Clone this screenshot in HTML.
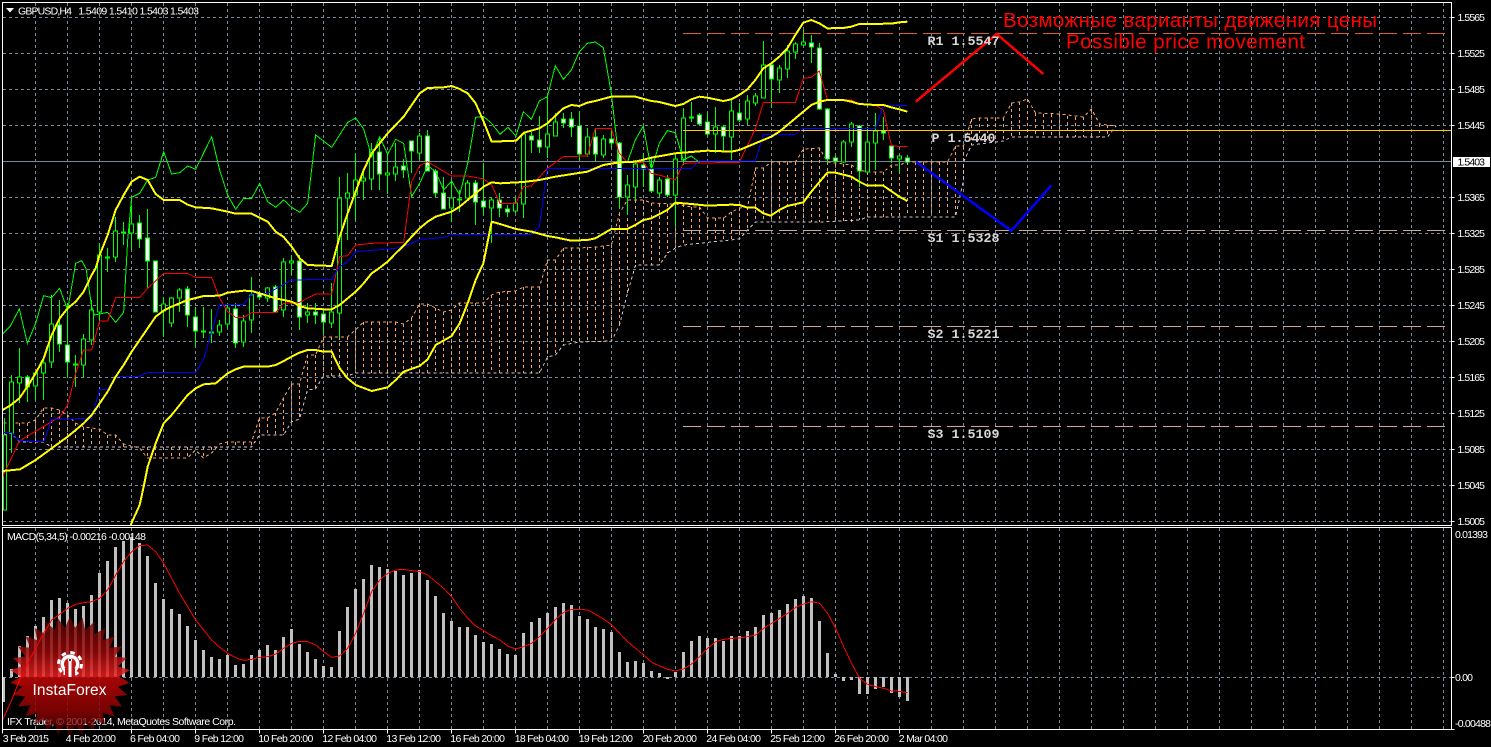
<!DOCTYPE html>
<html><head><meta charset="utf-8"><title>GBPUSD,H4</title>
<style>
html,body{margin:0;padding:0;background:#000;width:1491px;height:747px;overflow:hidden}
svg{display:block}
.a{font-family:"Liberation Sans",sans-serif;font-size:10.5px;fill:#fff}
.m{font-family:"Liberation Mono",monospace;font-size:13.33px;font-weight:bold;fill:#d8d8d8}
.r{font-family:"Liberation Sans",sans-serif;font-size:20.5px;fill:#f00}
</style></head><body>
<svg xmlns="http://www.w3.org/2000/svg" width="1491" height="747" viewBox="0 0 1491 747">
<rect width="1491" height="747" fill="#000"/>
<g fill="none" shape-rendering="crispEdges">
<!-- grid -->
<g stroke="#778899" stroke-width="1" stroke-dasharray="3 3">
<path d="M3 17.5H1451M3 53.5H1451M3 89.5H1451M3 125.5H1451M3 197.5H1451M3 233.5H1451M3 269.5H1451M3 305.5H1451M3 341.5H1451M3 377.5H1451M3 413.5H1451M3 449.5H1451M3 485.5H1451M3 521.5H1451M3 677.5H1451"/>
<path d="M35.5 3V525M67.5 3V525M99.5 3V525M131.5 3V525M163.5 3V525M195.5 3V525M227.5 3V525M259.5 3V525M291.5 3V525M323.5 3V525M355.5 3V525M387.5 3V525M419.5 3V525M451.5 3V525M483.5 3V525M515.5 3V525M547.5 3V525M579.5 3V525M611.5 3V525M643.5 3V525M675.5 3V525M707.5 3V525M739.5 3V525M771.5 3V525M803.5 3V525M835.5 3V525M867.5 3V525M899.5 3V525M931.5 3V525M963.5 3V525M995.5 3V525M1027.5 3V525M1059.5 3V525M1091.5 3V525M1123.5 3V525M1155.5 3V525M1187.5 3V525M1219.5 3V525M1251.5 3V525M1283.5 3V525M1315.5 3V525M1347.5 3V525M1379.5 3V525M1411.5 3V525M1443.5 3V525"/>
<path d="M35.5 528V729M67.5 528V729M99.5 528V729M131.5 528V729M163.5 528V729M195.5 528V729M227.5 528V729M259.5 528V729M291.5 528V729M323.5 528V729M355.5 528V729M387.5 528V729M419.5 528V729M451.5 528V729M483.5 528V729M515.5 528V729M547.5 528V729M579.5 528V729M611.5 528V729M643.5 528V729M675.5 528V729M707.5 528V729M739.5 528V729M771.5 528V729M803.5 528V729M835.5 528V729M867.5 528V729M899.5 528V729M931.5 528V729M963.5 528V729M995.5 528V729M1027.5 528V729M1059.5 528V729M1091.5 528V729M1123.5 528V729M1155.5 528V729M1187.5 528V729M1219.5 528V729M1251.5 528V729M1283.5 528V729M1315.5 528V729M1347.5 528V729M1379.5 528V729M1411.5 528V729M1443.5 528V729"/>
</g>
<path d="M3 161.5H1451" stroke="#778899"/>
<!-- cloud -->
<g stroke-dasharray="3 3">
<path stroke="#f4a460" d="M11.5 423V433M19.5 423V442M27.5 423V442M35.5 420V442M43.5 408V442M51.5 408V447M59.5 410V447M67.5 415V447M75.5 423V447M83.5 427V447M91.5 429V447M99.5 429V447M107.5 435V447M115.5 435V447M123.5 444V447M147.5 447V458M155.5 447V458M163.5 447V458M171.5 447V458M179.5 447V458M187.5 447V458M203.5 447V458M211.5 447V453M227.5 442V447M235.5 442V447M243.5 442V447M251.5 442V447M259.5 418V435M267.5 418V435M275.5 413V435M283.5 398V435M291.5 384V422M299.5 384V419M307.5 355V390M315.5 355V389M323.5 337V376M331.5 337V376M339.5 337V376M347.5 337V376M355.5 330V373M363.5 322V373M371.5 322V373M379.5 322V373M387.5 322V373M395.5 322V373M403.5 324V373M411.5 318V373M419.5 304V373M427.5 304V373M435.5 308V373M443.5 312V373M451.5 310V373M459.5 303V373M467.5 303V373M475.5 303V373M483.5 303V373M491.5 295V373M499.5 292V373M507.5 291V373M515.5 291V373M523.5 287V373M531.5 287V373M539.5 287V373M547.5 260V357M555.5 260V355M563.5 248V345M571.5 248V344M579.5 248V342M587.5 247V342M595.5 247V342M603.5 246V341M611.5 245V341M619.5 213V325M627.5 200V293M635.5 200V267M643.5 200V265M651.5 203V265M659.5 204V265M667.5 204V253M675.5 204V248M683.5 204V245M691.5 207V243M699.5 207V242M707.5 218V241M715.5 218V241M723.5 218V240M731.5 212V239M739.5 208V239M747.5 207V230M755.5 168V222M763.5 168V222M771.5 162V222M779.5 162V222M787.5 162V222M795.5 162V222M803.5 149V222M811.5 148V222M819.5 148V222M827.5 162V222M835.5 163V222M843.5 164V222M851.5 165V222M859.5 170V220M867.5 172V217M875.5 172V217M883.5 172V217M891.5 165V217M899.5 165V216M907.5 162V216M915.5 162V216M923.5 162V216M931.5 162V216M939.5 162V216M947.5 162V216M955.5 146V216M963.5 146V180M971.5 119V145M979.5 118V142M987.5 118V142M995.5 118V142M1003.5 118V141M1011.5 103V137M1019.5 102V137M1027.5 99V137M1035.5 113V137M1043.5 114V137M1051.5 114V137M1059.5 114V137M1067.5 116V137M1075.5 117V137M1083.5 117V137M1091.5 109V137M1099.5 124V137M1107.5 125V137"/>
<polyline stroke="#f4a460" points="3.5,423 27.5,423 35.5,420 43.5,408 51.5,408 59.5,410 67.5,415 75.5,423 83.5,427 99.5,429 107.5,435 115.5,435 123.5,444 139.5,448 147.5,458 187.5,458 195.5,450 203.5,458 211.5,453 219.5,444 227.5,442 251.5,442 259.5,418 267.5,418 275.5,413 283.5,398 291.5,384 299.5,384 307.5,355 315.5,355 323.5,337 347.5,337 355.5,330 363.5,322 395.5,322 403.5,324 411.5,318 419.5,304 427.5,304 435.5,308 443.5,312 451.5,310 459.5,303 483.5,303 491.5,295 499.5,292 515.5,291 523.5,287 539.5,287 547.5,260 555.5,260 563.5,248 579.5,248 595.5,247 603.5,246 611.5,245 619.5,213 627.5,200 643.5,200 651.5,203 675.5,204 691.5,207 699.5,207 707.5,218 723.5,218 731.5,212 739.5,208 747.5,207 755.5,168 763.5,168 771.5,162 795.5,162 803.5,149 819.5,148 827.5,162 835.5,163 851.5,165 859.5,170 867.5,172 883.5,172 891.5,165 899.5,165 907.5,162 947.5,162 955.5,146 963.5,146 971.5,119 979.5,118 1003.5,118 1011.5,103 1019.5,102 1027.5,99 1035.5,113 1059.5,114 1083.5,117 1091.5,109 1099.5,124 1116,126"/>
<polyline stroke="#d8bfd8" points="3.5,435 11.5,433 19.5,442 43.5,442 51.5,447 251.5,447 259.5,435 283.5,435 291.5,422 299.5,419 307.5,390 315.5,389 323.5,376 347.5,376 355.5,373 539.5,373 547.5,357 555.5,355 563.5,345 579.5,342 611.5,341 619.5,325 627.5,293 635.5,265 659.5,265 667.5,253 675.5,248 683.5,245 739.5,239 747.5,230 755.5,222 819.5,222 859.5,220 867.5,217 955.5,217 963.5,180 963.5,162 971.5,145 995.5,142 1003.5,141 1011.5,137 1107.5,137 1116,126"/>
</g>
<!-- wicks -->
<path stroke="#0f0" d="M4.5 418V510M11.5 375V453M19.5 348V403M27.5 375V402M35.5 373V400M43.5 357V400M51.5 295V368M59.5 300V352M67.5 303V377M75.5 355V387M83.5 334V377M91.5 300V345M99.5 243V322M107.5 248V272M115.5 217V262M123.5 222V245M131.5 205V250M139.5 215V248M147.5 209V288M155.5 261V312M163.5 297V337M171.5 297V327M179.5 288V312M187.5 286V327M195.5 307V347M203.5 307V338M211.5 309V343M219.5 320V336M227.5 303V328M235.5 303V348M243.5 315V347M251.5 277V333M259.5 291V300M267.5 287V302M275.5 285V313M283.5 258V317M291.5 255V275M299.5 255V330M307.5 303V323M315.5 303V324M323.5 308V334M331.5 283V328M339.5 177V338M347.5 173V240M355.5 153V220M363.5 170V200M371.5 143V190M379.5 137V190M387.5 155V194M395.5 143V181M403.5 159V178M411.5 141V173M419.5 133V160M427.5 130V171M435.5 169V197M443.5 177V209M451.5 180V222M459.5 190V212M467.5 180V198M475.5 180V225M483.5 163V215M491.5 197V243M499.5 193V217M507.5 205V217M515.5 197V213M523.5 134V218M531.5 132V153M539.5 116V153M547.5 97V158M555.5 113V136M563.5 113V128M571.5 112V137M579.5 111V160M587.5 128V157M595.5 128V162M603.5 135V158M611.5 128V148M619.5 142V209M627.5 175V215M635.5 160V200M643.5 153V187M651.5 157V193M659.5 177V197M667.5 175V197M675.5 153V227M683.5 108V165M691.5 102V122M699.5 113V125M707.5 113V135M715.5 107V153M723.5 125V152M731.5 100V160M739.5 103V122M747.5 95V125M755.5 93V106M763.5 41V98M771.5 65V107M779.5 65V93M787.5 45V78M795.5 42V59M803.5 30V46M811.5 35V63M819.5 43V110M827.5 108V163M835.5 155V163M843.5 140V163M851.5 122V147M859.5 125V187M867.5 127V173M875.5 113V170M883.5 117V140M891.5 146V163M899.5 156V173M907.5 155V163"/>
<!-- black bodies -->
<path stroke="#0f0" fill="#000" d="M3.5 435h3V510h-3zM9.5 382h4V433h-4zM17.5 377h4V383h-4zM33.5 373h4V386h-4zM41.5 363h4V373h-4zM49.5 324h4V362h-4zM81.5 339h4V365h-4zM89.5 310h4V340h-4zM97.5 255h4V312h-4zM113.5 231h4V257h-4zM129.5 224h4V233h-4zM161.5 304h4V311h-4zM169.5 298h4V323h-4zM177.5 290h4V298h-4zM217.5 325h4V332h-4zM225.5 308h4V324h-4zM241.5 321h4V342h-4zM249.5 295h4V320h-4zM265.5 288h4V298h-4zM281.5 262h4V310h-4zM289.5 261h4V263h-4zM305.5 312h4V315h-4zM329.5 312h4V323h-4zM337.5 198h4V313h-4zM345.5 193h4V198h-4zM353.5 180h4V195h-4zM361.5 178h4V181h-4zM369.5 150h4V179h-4zM385.5 173h4V175h-4zM393.5 167h4V174h-4zM417.5 136h4V153h-4zM449.5 198h4V208h-4zM465.5 183h4V198h-4zM489.5 200h4V208h-4zM513.5 203h4V211h-4zM521.5 134h4V204h-4zM545.5 134h4V147h-4zM553.5 122h4V136h-4zM585.5 137h4V154h-4zM601.5 139h4V155h-4zM625.5 185h4V197h-4zM633.5 164h4V187h-4zM657.5 180h4V193h-4zM673.5 159h4V195h-4zM681.5 118h4V160h-4zM713.5 127h4V134h-4zM729.5 111h4V137h-4zM745.5 101h4V119h-4zM753.5 96h4V103h-4zM761.5 65h4V98h-4zM777.5 68h4V80h-4zM785.5 51h4V69h-4zM793.5 44h4V52h-4zM801.5 42h4V45h-4zM841.5 142h4V162h-4zM849.5 124h4V142h-4zM865.5 142h4V172h-4zM873.5 131h4V143h-4zM897.5 156h4V159h-4zM73.5 364h4V365h-4zM105.5 257h4V258h-4zM121.5 232h4V233h-4zM201.5 331h4V332h-4zM209.5 332h4V333h-4zM457.5 199h4V200h-4zM689.5 117h4V118h-4z"/>
<!-- white bodies -->
<path stroke="#0f0" fill="#fff" d="M25.5 377h4V387h-4zM57.5 325h4V344h-4zM65.5 345h4V362h-4zM137.5 223h4V239h-4zM145.5 238h4V261h-4zM153.5 261h4V312h-4zM185.5 289h4V315h-4zM193.5 317h4V331h-4zM233.5 309h4V343h-4zM257.5 294h4V297h-4zM273.5 287h4V312h-4zM297.5 261h4V317h-4zM313.5 312h4V315h-4zM321.5 314h4V322h-4zM377.5 152h4V174h-4zM401.5 166h4V170h-4zM409.5 141h4V151h-4zM425.5 136h4V171h-4zM433.5 171h4V193h-4zM441.5 193h4V209h-4zM473.5 183h4V202h-4zM481.5 201h4V207h-4zM497.5 200h4V208h-4zM505.5 209h4V212h-4zM529.5 136h4V140h-4zM537.5 140h4V147h-4zM561.5 119h4V123h-4zM569.5 119h4V127h-4zM577.5 126h4V154h-4zM593.5 137h4V154h-4zM609.5 139h4V143h-4zM617.5 143h4V197h-4zM641.5 165h4V169h-4zM649.5 169h4V191h-4zM665.5 179h4V195h-4zM697.5 115h4V124h-4zM705.5 122h4V134h-4zM721.5 127h4V136h-4zM737.5 113h4V120h-4zM769.5 65h4V79h-4zM809.5 43h4V47h-4zM817.5 48h4V109h-4zM825.5 109h4V159h-4zM833.5 158h4V161h-4zM857.5 126h4V171h-4zM881.5 131h4V133h-4zM889.5 146h4V158h-4zM905.5 158h4V162h-4z"/>
<!-- pivots -->
<path d="M683 33.5H1446" stroke="#d8602a" stroke-dasharray="18 6"/>
<path d="M683 130.5H1451" stroke="#ffc800"/>
<path d="M683 230.5H1449" stroke="#d0a898" stroke-dasharray="18 6"/>
<path d="M683 326.5H1449" stroke="#d8a0a0" stroke-dasharray="18 6"/>
<path d="M683 426.5H1449" stroke="#d8a0a0" stroke-dasharray="18 6"/>
<!-- indicator lines, zoom-coordinate groups -->
<g transform="scale(.33333)" stroke-width="3">
<polyline stroke="#0f0" points="8,1002 30,980 58,927 82,1030 107,970 131,887 155,893 179,865 203,930 227,790 245,782 258,805 275,920 283,945 323,937 347,967 371,937 383,720 395,592 419,580 443,540 467,532 491,455 515,522 539,518 563,498 587,508 635,410 659,510 683,585 707,628 731,595 755,595 779,550 803,605 827,622 851,600 875,622 899,637 923,610 947,405 995,442 1043,367 1067,354 1091,387 1115,470 1139,410 1163,463 1187,418 1211,430 1235,590 1259,550 1283,497 1307,515 1331,570 1355,543 1379,585 1403,490 1427,352 1451,350 1475,370 1500,403 1524,382 1548,408 1570,335 1594,358 1618,303 1642,290 1666,197 1690,238 1714,210 1738,155 1762,130 1786,126 1810,143 1834,280 1858,490 1882,487 1906,420 1930,378 1954,510 1978,430 2002,392 2026,398 2050,480 2074,468 2098,487"/>
<polyline stroke="#f00" points="8,1430 58,1323 180,1250 203,1215 227,1120 251,1050 275,1050 299,963 323,963 347,892 419,892 443,865 491,820 563,820 587,832 635,832 659,895 683,935 707,952 731,952 755,938 827,938 851,910 899,907 947,882 995,882 1019,770 1043,767 1067,735 1115,730 1211,727 1235,545 1259,497 1283,485 1307,500 1355,528 1403,528 1451,537 1475,555 1500,610 1548,610 1570,560 1594,558 1642,505 1690,470 1762,468 1786,385 1834,385 1858,460 1882,487 1930,487 1954,520 1978,525 2026,540 2050,490 2218,487 2266,387 2290,308 2386,308 2410,235 2434,232 2458,213 2482,298 2554,300 2578,312 2626,315 2650,330 2674,436 2698,440 2722,440"/>
<polyline stroke="#00f" points="8,1298 35,1298 58,1323 131,1325 155,1258 275,1255 299,1168 323,1168 347,1129 419,1129 443,1117 587,1117 611,1078 635,995 659,914 731,914 755,882 803,880 875,840 995,838 1019,800 1043,785 1067,755 1187,745 1235,730 1259,718 1331,713 1355,703 1594,703 1618,680 1642,505 2074,505 2098,483 2266,483 2290,403 2386,403 2410,385 2626,385 2650,316 2722,316"/>
<g stroke="#ff0" stroke-width="6" stroke-linejoin="round">
<polyline points="8,1230 30,1217 58,1195 82,1160 107,1120 131,1075 155,1005 179,955 203,925 227,905 251,875 275,825 287,805 299,765 323,705 347,630 371,585 395,545 419,530 443,540 467,582 491,600 539,600 563,614 587,622 635,625 683,635 707,641 755,641 803,665 827,695 851,711 875,740 899,775 923,795 995,798 1019,710 1043,640 1067,575 1091,510 1115,460 1139,430 1163,400 1187,375 1211,350 1235,315 1259,280 1283,264 1331,262 1355,258 1379,267 1403,280 1427,310 1451,365 1475,425 1548,422 1572,398 1618,385 1642,370 1690,325 1714,315 1738,318 1762,308 1786,303 1834,290 1906,290 1954,303 1978,306 2026,318 2050,312 2074,298 2098,290 2122,293 2170,303 2194,298 2218,285 2242,268 2266,240 2290,205 2314,190 2338,170 2362,145 2386,105 2410,68 2434,60 2458,70 2482,85 2530,84 2554,80 2578,72 2674,71 2698,67 2722,65"/>
<polyline points="8,1413 60,1408 107,1380 155,1345 203,1310 227,1290 251,1270 275,1245 299,1210 323,1175 347,1130 371,1095 395,1055 419,1020 443,985 467,950 491,932 515,920 539,910 563,900 587,894 611,888 659,887 683,878 731,872 755,873 779,880 827,895 851,900 875,905 899,918 923,925 971,928 995,928 1019,915 1043,895 1067,875 1091,850 1115,820 1130,810 1163,785 1187,760 1211,737 1235,710 1259,685 1283,665 1307,650 1355,635 1379,620 1403,600 1427,580 1451,560 1475,547 1500,550 1570,546 1618,540 1666,530 1762,515 1810,495 1858,487 1906,485 1954,473 2026,460 2074,456 2122,452 2194,455 2218,450 2266,430 2314,410 2338,395 2362,375 2386,355 2410,335 2434,315 2458,305 2482,300 2530,300 2554,305 2578,312 2626,315 2650,315 2674,322 2698,328 2722,335"/>
<polyline points="392,1575 419,1515 431,1460 443,1400 467,1330 491,1270 515,1245 563,1185 587,1165 611,1153 647,1150 683,1120 707,1108 731,1100 803,1100 827,1095 851,1083 875,1070 899,1058 923,1050 947,1050 971,1055 995,1055 1019,1105 1043,1135 1067,1155 1115,1173 1163,1162 1187,1140 1211,1115 1259,1098 1283,1078 1307,1035 1355,1008 1379,970 1403,910 1427,840 1450,790 1475,665 1500,672 1548,687 1596,695 1642,708 1666,712 1714,722 1762,720 1786,715 1834,687 1882,687 1906,675 1930,660 1954,655 2002,630 2026,608 2074,612 2122,617 2194,614 2218,615 2242,623 2266,623 2290,640 2312,647 2338,630 2362,618 2410,607 2434,575 2482,518 2506,518 2554,530 2578,545 2602,557 2650,557 2698,590 2722,603"/>
</g>
</g>
<!-- hand drawn arrows -->
<polyline points="915.7,101.7 996.7,34 1043.3,74" stroke="#f00" stroke-width="2.5"/>
<polyline points="916,161.7 1011.3,230.7 1051.3,185.3" stroke="#00f" stroke-width="2.5"/>
<!-- MACD histogram -->
<path stroke="#c0c0c0" stroke-width="3" d="M3.5 677V702M11.5 677V669M19.5 677V646M27.5 677V636M35.5 677V626M43.5 677V617M51.5 677V600M59.5 677V598M67.5 677V603M75.5 677V609M83.5 677V606M91.5 677V595M99.5 677V573M107.5 677V561M115.5 677V547M123.5 677V541M131.5 677V537M139.5 677V543M147.5 677V556M155.5 677V583M163.5 677V599M171.5 677V609M179.5 677V614M187.5 677V626M195.5 677V640M203.5 677V650M211.5 677V657M219.5 677V659M227.5 677V655M235.5 677V665M243.5 677V664M251.5 677V655M259.5 677V650M267.5 677V645M275.5 677V650M283.5 677V637M291.5 677V629M299.5 677V644M307.5 677V652M315.5 677V659M323.5 677V666M331.5 677V667M339.5 677V631M347.5 677V607M355.5 677V589M363.5 677V579M371.5 677V565M379.5 677V567M387.5 677V569M395.5 677V571M403.5 677V575M411.5 677V573M419.5 677V570M427.5 677V580M435.5 677V596M443.5 677V613M451.5 677V621M459.5 677V627M467.5 677V627M475.5 677V635M483.5 677V642M491.5 677V644M499.5 677V649M507.5 677V654M515.5 677V655M523.5 677V633M531.5 677V622M539.5 677V618M547.5 677V613M555.5 677V607M563.5 677V603M571.5 677V605M579.5 677V616M587.5 677V619M595.5 677V627M603.5 677V629M611.5 677V632M619.5 677V652M627.5 677V662M635.5 677V661M643.5 677V663M651.5 677V671M659.5 677V673M667.5 677V679M675.5 677V672M683.5 677V652M691.5 677V641M699.5 677V636M707.5 677V638M715.5 677V638M723.5 677V641M731.5 677V636M739.5 677V636M747.5 677V631M755.5 677V627M763.5 677V615M771.5 677V613M779.5 677V610M787.5 677V604M795.5 677V599M803.5 677V596M811.5 677V598M819.5 677V621M827.5 677V653M835.5 677V674M843.5 677V681M851.5 677V680M859.5 677V694M867.5 677V694M875.5 677V689M883.5 677V687M891.5 677V693M899.5 677V697M907.5 677V701"/>
</g>
<!-- chart text under logo -->
<text class="a" x="7" y="725" textLength="229" lengthAdjust="spacing">IFX Trader, © 2001-2014, MetaQuotes Software Corp.</text>
<!-- InstaForex logo -->
<defs><linearGradient id="lg" x1="0" y1="0" x2="0" y2="1"><stop offset="0" stop-color="#5a0000" stop-opacity=".8"/><stop offset=".3" stop-color="#9a0808" stop-opacity=".84"/><stop offset=".5" stop-color="#ee2222" stop-opacity=".84"/><stop offset=".505" stop-color="#b80606" stop-opacity=".9"/><stop offset=".8" stop-color="#8a0303" stop-opacity=".85"/><stop offset="1" stop-color="#5a0000" stop-opacity=".55"/></linearGradient></defs>
<polygon transform="translate(70 676.5)" fill="url(#lg)" points="0,-60 5.1,-48.7 12.5,-58.7 15.1,-46.6 24.4,-54.8 24.5,-42.4 35.3,-48.5 32.8,-36.4 44.6,-40.1 39.6,-28.8 52,-30 44.8,-19.9 57.1,-18.5 47.9,-10.2 59.7,-6.3 49,0 59.7,6.3 47.9,10.2 57.1,18.5 44.8,19.9 52,30 39.6,28.8 44.6,40.1 32.8,36.4 35.3,48.5 24.5,42.4 24.4,54.8 15.1,46.6 12.5,58.7 5.1,48.7 0,60 -5.1,48.7 -12.5,58.7 -15.1,46.6 -24.4,54.8 -24.5,42.4 -35.3,48.5 -32.8,36.4 -44.6,40.1 -39.6,28.8 -52,30 -44.8,19.9 -57.1,18.5 -47.9,10.2 -59.7,6.3 -49,0 -59.7,-6.3 -47.9,-10.2 -57.1,-18.5 -44.8,-19.9 -52,-30 -39.6,-28.8 -44.6,-40.1 -32.8,-36.4 -35.3,-48.5 -24.5,-42.4 -24.4,-54.8 -15.1,-46.6 -12.5,-58.7 -5.1,-48.7"/>
<circle cx="70" cy="664" r="9.5" fill="#fff"/>
<circle cx="70" cy="664" r="11.5" fill="none" stroke="#fff" stroke-width="3" stroke-dasharray="4.5 4.53"/>
<circle cx="70" cy="664" r="6" fill="#c01818"/>
<path d="M64.5 668h11v9h-11z" fill="#c01818"/>
<path d="M68.5 661.5h3V677h-3zM63.5 668.5h1.5V675h-1.5zM75 668.5h1.5V675H75z" fill="#fff"/>
<circle cx="70" cy="660" r="2.2" fill="#fff"/><circle cx="70" cy="660" r="1.1" fill="#600"/>
<text x="32.5" y="695" font-family="Liberation Sans, sans-serif" font-size="15.5" fill="#fff" textLength="74" lengthAdjust="spacing">InstaForex</text>
<!-- MACD signal -->
<g fill="none" shape-rendering="crispEdges" transform="translate(0 520) scale(.33333)" stroke="#f00" stroke-width="3">
<polyline points="8,600 35,540 59,480 83,430 107,385 131,340 155,300 179,283 203,265 227,253 251,248 275,245 299,235 323,210 347,165 371,125 395,95 419,77 443,75 467,95 491,130 515,175 539,220 563,260 587,300 611,330 635,360 659,382 683,400 707,413 731,421 755,418 779,412 803,410 827,402 851,385 875,370 899,364 923,365 947,375 971,395 995,412 1019,408 1043,385 1067,340 1091,280 1115,215 1139,180 1163,160 1187,150 1211,148 1235,152 1259,155 1283,165 1307,185 1331,205 1355,230 1379,265 1403,295 1427,318 1451,332 1475,347 1500,360 1523,378 1547,387 1571,380 1595,370 1619,350 1643,325 1667,298 1691,277 1715,268 1739,268 1763,270 1787,283 1811,297 1835,315 1859,340 1883,365 1907,385 1931,405 1955,427 1979,438 2003,448 2027,453 2051,447 2075,432 2099,410 2123,385 2147,365 2171,358 2195,355 2219,354 2243,350 2267,345 2291,325 2315,310 2339,295 2363,280 2387,262 2411,252 2435,245 2459,250 2483,280 2507,325 2531,380 2555,430 2579,475 2603,493 2627,500 2651,505 2675,513 2699,514 2723,518"/>
</g>
<!-- frames -->
<g fill="none" stroke="#fff" shape-rendering="crispEdges">
<path d="M2.5 2.5H1451.5V525.5H2.5Z"/>
<path d="M2.5 527.5H1451.5V729.5H2.5Z"/>
<path d="M1451.5 17.5h3M1451.5 53.5h3M1451.5 89.5h3M1451.5 125.5h3M1451.5 197.5h3M1451.5 233.5h3M1451.5 269.5h3M1451.5 305.5h3M1451.5 341.5h3M1451.5 377.5h3M1451.5 413.5h3M1451.5 449.5h3M1451.5 485.5h3M1451.5 521.5h3M1451.5 677.5h3M1451.5 729.5h3"/>
<path d="M2.5 730v3.5M131.5 730v3.5M195.5 730v3.5M259.5 730v3.5M323.5 730v3.5M387.5 730v3.5M451.5 730v3.5M515.5 730v3.5M579.5 730v3.5M643.5 730v3.5M707.5 730v3.5M771.5 730v3.5M835.5 730v3.5M899.5 730v3.5"/>
</g>
<polygon points="6,8 14,8 10,12.5" fill="#fff"/>
<text class="a" x="18" y="14.5" textLength="54" lengthAdjust="spacing">GBPUSD,H4</text>
<text class="a" x="78.3" y="14.5" textLength="120.7" lengthAdjust="spacing">1.5409 1.5410 1.5403 1.5403</text>
<text class="a" x="7" y="540" textLength="139" lengthAdjust="spacing">MACD(5,34,5) -0.00216 -0.00148</text>
<text class="r" x="1003" y="27" textLength="374" lengthAdjust="spacing">Возможные варианты движения цены</text>
<text class="r" x="1066" y="48.5" textLength="239" lengthAdjust="spacing">Possible price movement</text>
<text class="m" x="927.5" y="45">R1 1.5547</text>
<text class="m" x="931.5" y="142">P 1.5440</text>
<text class="m" x="927.5" y="242">S1 1.5328</text>
<text class="m" x="927.5" y="338">S2 1.5221</text>
<text class="m" x="927.5" y="438">S3 1.5109</text>
<!-- price axis -->
<g class="a">
<text class="a" x="1457.5" y="20.8" textLength="27.5">1.5565</text>
<text class="a" x="1457.5" y="56.8" textLength="27.5">1.5525</text>
<text class="a" x="1457.5" y="92.8" textLength="27.5">1.5485</text>
<text class="a" x="1457.5" y="128.8" textLength="27.5">1.5445</text>
<text class="a" x="1457.5" y="200.8" textLength="27.5">1.5365</text>
<text class="a" x="1457.5" y="236.8" textLength="27.5">1.5325</text>
<text class="a" x="1457.5" y="272.8" textLength="27.5">1.5285</text>
<text class="a" x="1457.5" y="308.8" textLength="27.5">1.5245</text>
<text class="a" x="1457.5" y="344.8" textLength="27.5">1.5205</text>
<text class="a" x="1457.5" y="380.8" textLength="27.5">1.5165</text>
<text class="a" x="1457.5" y="416.8" textLength="27.5">1.5125</text>
<text class="a" x="1457.5" y="452.8" textLength="27.5">1.5085</text>
<text class="a" x="1457.5" y="488.8" textLength="27.5">1.5045</text>
<text class="a" x="1457.5" y="524.8" textLength="27.5">1.5005</text>
</g>
<rect x="1453" y="157" width="37" height="10" fill="#fff"/>
<text x="1457.5" y="165.5" font-family="Liberation Sans, sans-serif" font-size="10.5" fill="#000" textLength="27.5">1.5403</text>
<text class="a" x="1455" y="538" textLength="33">0.01393</text>
<text class="a" x="1455" y="681" textLength="18">0.00</text>
<text class="a" x="1455" y="727" textLength="36">-0.00488</text>
<!-- time axis -->
<text class="a" x="2.7" y="742" textLength="46.3">3 Feb 2015</text>
<text class="a" x="65.7" y="742" textLength="50.3">4 Feb 20:00</text>
<text class="a" x="130" y="742" textLength="50">6 Feb 04:00</text>
<text class="a" x="194.3" y="742" textLength="49.7">9 Feb 12:00</text>
<text class="a" x="258.3" y="742" textLength="55">10 Feb 20:00</text>
<text class="a" x="322.3" y="742" textLength="54.7">12 Feb 04:00</text>
<text class="a" x="386.3" y="742" textLength="54.7">13 Feb 12:00</text>
<text class="a" x="450.3" y="742" textLength="54.7">16 Feb 20:00</text>
<text class="a" x="514.7" y="742" textLength="54.3">18 Feb 04:00</text>
<text class="a" x="578.7" y="742" textLength="54.3">19 Feb 12:00</text>
<text class="a" x="642.7" y="742" textLength="54.3">20 Feb 20:00</text>
<text class="a" x="706.3" y="742" textLength="54.7">24 Feb 04:00</text>
<text class="a" x="770.3" y="742" textLength="54.7">25 Feb 12:00</text>
<text class="a" x="834.3" y="742" textLength="54.7">26 Feb 20:00</text>
<text class="a" x="898.7" y="742" textLength="49.3">2 Mar 04:00</text>
</svg>
</body></html>
